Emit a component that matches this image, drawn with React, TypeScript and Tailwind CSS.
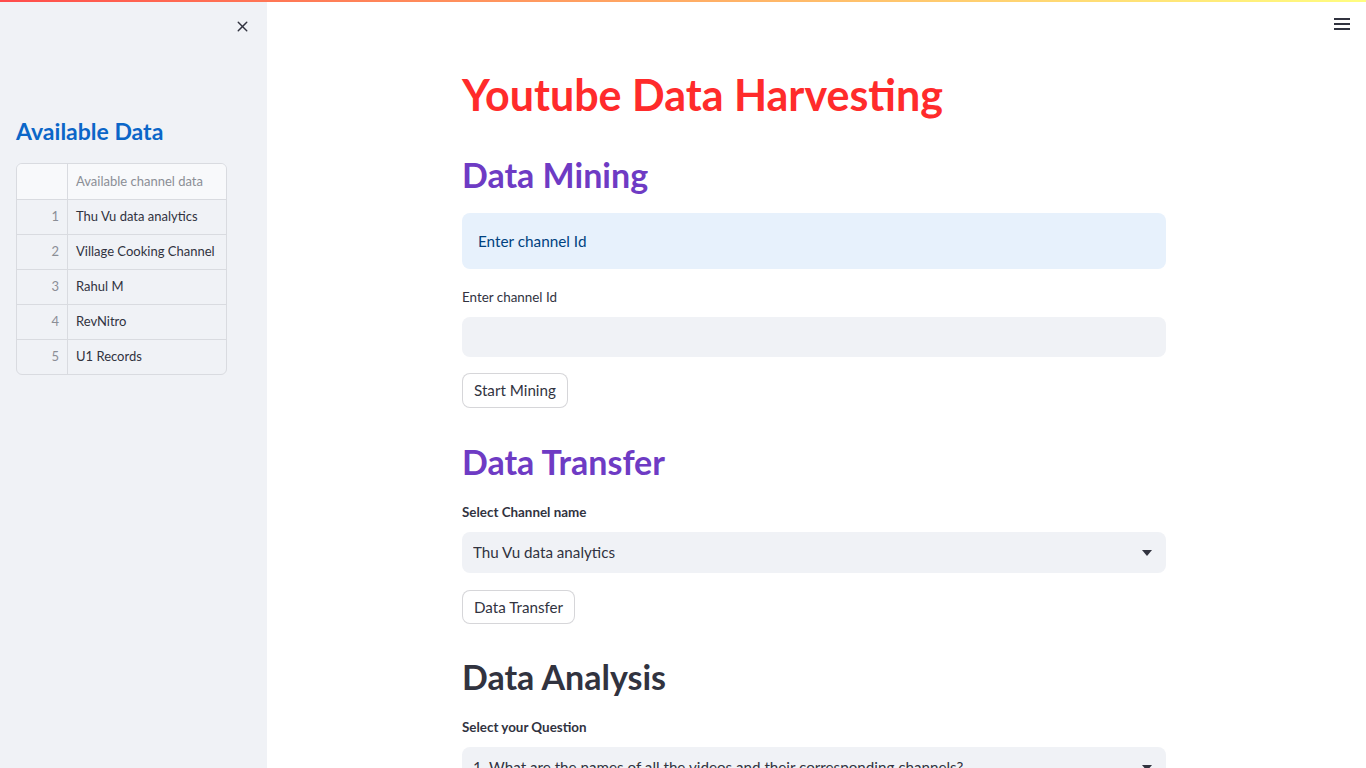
import { X } from "lucide-react";

const channels = [
    "Thu Vu data analytics",
    "Village Cooking Channel",
    "Rahul M",
    "RevNitro",
    "U1 Records",
];

function Caret() {
    return (
        <svg width="10" height="6" viewBox="0 0 10 6" className="shrink-0 fill-[#31333f]">
            <path d="M0 0h10L5 6z" />
        </svg>
    );
}

function SelectBox({ value }: { value: string }) {
    return (
        <div className="flex h-[41px] items-center justify-between rounded-lg bg-[#f0f2f6] pl-[11px] pr-[14px] text-[15.2px] text-[#31333f]">
            <span className="truncate">{value}</span>
            <Caret />
        </div>
    );
}

function Button({ label, height }: { label: string; height: string }) {
    return (
        <button
            className={`self-start rounded-lg border border-[#31333f33] bg-white px-[11px] text-[15.2px] text-[#31333f] ${height}`}
        >
            {label}
        </button>
    );
}

export default function App() {
    return (
        <div
            className="relative flex h-screen w-full overflow-hidden bg-white text-[#31333f]"
            style={{ fontFamily: "Lato, 'Noto Sans', sans-serif" }}
        >
            {/* decoracion superior */}
            <div className="absolute left-0 right-0 top-0 z-10 h-[2px] bg-gradient-to-r from-[#ff4b4b] to-[#fffd80]" />

            {/* Sidebar */}
            <aside className="flex w-[267px] shrink-0 flex-col bg-[#f0f2f6] px-4">
                <div className="flex justify-end pt-[18px]">
                    <X size={17} strokeWidth={2} className="text-[#31333f]" />
                </div>
                <h2 className="mt-[81px] text-[23px] font-bold leading-[30px] text-[#0b66c8]">
                    Available Data
                </h2>
                <div className="mt-[17px] w-[211px] overflow-hidden rounded-md border border-[#d9dbe0]">
                    <div className="flex h-[35px] bg-[#f8f9fb]">
                        <div className="w-[51px] border-r border-[#d9dbe0]" />
                        <div className="flex items-center whitespace-nowrap px-2 text-[13px] text-[#8b8e96]">
                            Available channel data
                        </div>
                    </div>
                    {channels.map((c, i) => (
                        <div key={c} className="flex h-[35px] border-t border-[#d9dbe0]">
                            <div className="flex w-[51px] shrink-0 items-center justify-end border-r border-[#d9dbe0] pr-2 text-[13px] text-[#8b8e96]">
                                {i + 1}
                            </div>
                            <div className="flex items-center whitespace-nowrap px-2 text-[13px] text-[#31333f]">{c}</div>
                        </div>
                    ))}
                </div>
            </aside>

            {/* Contenido principal */}
            <main className="relative flex-1">
                <div className="absolute right-[16px] top-[18px] flex flex-col gap-[3px]">
                    <span className="block h-[2px] w-[16px] bg-[#31333f]" />
                    <span className="block h-[2px] w-[16px] bg-[#31333f]" />
                    <span className="block h-[2px] w-[16px] bg-[#31333f]" />
                </div>

                <div className="ml-[195px] flex w-[704px] flex-col">
                    <h1 className="mt-[69px] text-[43px] font-bold leading-[52px] text-[#ff2b2b]">
                        Youtube Data Harvesting
                    </h1>

                    <h2 className="mt-[32px] text-[34px] font-bold leading-[44px] text-[#6e3bc4]">
                        Data Mining
                    </h2>
                    <div className="mt-[16px] flex h-[56px] items-center rounded-lg bg-[#e7f1fc] px-4 text-[15.3px] text-[#004280]">
                        Enter channel Id
                    </div>
                    <label className="mt-[18px] h-5 text-[13.4px] leading-5">Enter channel Id</label>
                    <div className="mt-[10px] h-[40px] rounded-lg bg-[#f0f2f6]" />
                    <div className="mt-[16px] flex">
                        <Button label="Start Mining" height="h-[35px]" />
                    </div>

                    <h2 className="mt-[32px] text-[34px] font-bold leading-[44px] text-[#6e3bc4]">
                        Data Transfer
                    </h2>
                    <label className="mt-[18px] h-5 text-[13.4px] font-bold leading-5">Select Channel name</label>
                    <div className="mt-[10px]">
                        <SelectBox value="Thu Vu data analytics" />
                    </div>
                    <div className="mt-[17px] flex">
                        <Button label="Data Transfer" height="h-[34px]" />
                    </div>

                    <h2 className="mt-[31px] text-[34px] font-bold leading-[44px] text-[#31333f]">
                        Data Analysis
                    </h2>
                    <label className="mt-[18px] h-5 text-[13.4px] font-bold leading-5">Select your Question</label>
                    <div className="mt-[10px]">
                        <SelectBox value="1. What are the names of all the videos and their corresponding channels?" />
                    </div>
                </div>
            </main>
        </div>
    );
}
